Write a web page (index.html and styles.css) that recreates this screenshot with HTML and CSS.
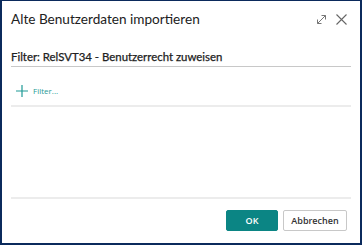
FILE: index.html
```html
<!DOCTYPE html>
<html lang="de">
<head>
  <meta charset="UTF-8" />
  <title>Alte Benutzerdaten importieren</title>
  <link rel="stylesheet" href="styles.css">
</head>
<body>
  <div class="dialog">
    <div class="header">
      <h1 class="title">Alte Benutzerdaten importieren</h1>
      <div class="tools">
        <svg width="11" height="11" viewBox="0 0 11 11"><path d="M1.5 9.5 L9.5 1.5 M5.5 1.5 H9.5 V5.5 M1.5 5.5 V9.5 H5.5" fill="none" stroke="#777" stroke-width="1"/></svg>
        <svg width="11" height="11" viewBox="0 0 11 11"><path d="M0.5 0.5 L10.5 10.5 M10.5 0.5 L0.5 10.5" fill="none" stroke="#666" stroke-width="1.1"/></svg>
      </div>
    </div>

    <div class="filter-title">Filter: RelSVT34 - Benutzerrecht zuweisen</div>

    <div class="filter-add">
      <svg width="12" height="12" viewBox="0 0 12 12"><path d="M6 0 V12 M0 6 H12" stroke="#1f9a96" stroke-width="1.2"/></svg>
      <span>Filter...</span>
    </div>

    <div class="content"></div>

    <div class="footer">
      <button class="btn primary">OK</button>
      <button class="btn">Abbrechen</button>
    </div>
  </div>
</body>
</html>
```

FILE: styles.css
```css
html, body { margin: 0; padding: 0; }
body { width: 362px; height: 245px; font-family: "Open Sans", "Noto Sans", sans-serif; color: #212121; }
.dialog { box-sizing: border-box; width: 362px; height: 245px; border: 2px solid #0b2a5c; border-top-width: 1px; background: #fff; display: flex; flex-direction: column; padding: 0 9px; }
.header { display: flex; align-items: center; justify-content: space-between; height: 36px; }
.title { margin: 0; font-family: Lato, sans-serif; font-size: 13.6px; font-weight: 400; }
.tools { display: flex; gap: 9px; padding-right: 4px; }
.filter-title { margin-top: 13px; font-family: Lato, sans-serif; font-size: 11.4px; font-weight: 400; -webkit-text-stroke: 0.25px #212121; padding-bottom: 3px; border-bottom: 1px solid #c8c8c8; }
.filter-add { display: flex; align-items: flex-start; gap: 5px; padding: 18px 0 0 5px; box-sizing: border-box; height: 40px; border-bottom: 2px solid #ececec; color: #1f9a96; font-size: 8px; line-height: 12px; }
.content { flex: 1; border-bottom: 2px solid #ececec; }
.footer { display: flex; justify-content: flex-end; gap: 5px; padding: 11px 4px 12px 0; }
.btn { box-sizing: border-box; height: 21px; font-family: inherit; font-size: 9px; font-weight: 600; border: 1px solid #c8c8c8; background: #fff; color: #333; border-radius: 2px; padding: 0; width: 64px; }
.btn.primary { background: #0b8584; border-color: #0b8584; color: #fff; width: 52px; }
```
